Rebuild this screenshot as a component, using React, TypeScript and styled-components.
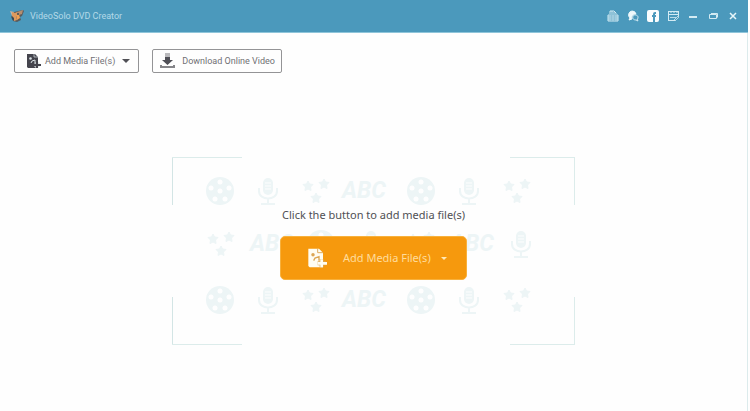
import React from "react";
import styled, { createGlobalStyle, css } from "styled-components";

const GlobalStyle = createGlobalStyle`
  * { box-sizing: border-box; }
  body {
    margin: 0;
    background: #fefefe;
    font-family: "Noto Sans", "Open Sans", sans-serif;
  }
`;

const Window = styled.div`
  display: flex;
  flex-direction: column;
  min-height: 100vh;
  margin-right: 2px;
  border-right: 1px solid #dcebec;
  background: #fefefe;
`;

const TitleBar = styled.header`
  display: flex;
  align-items: center;
  height: 33px;
  margin-right: -1px;
  padding: 0 8px 0 9px;
  background: #4b99bc;
  border-bottom: 1px solid #8fc5da;
`;

const AppTitle = styled.h1`
  flex: 1;
  margin: 0 0 0 5px;
  color: #b4d9e8;
  font-family: Roboto, "Liberation Sans", sans-serif;
  font-size: 9px;
  font-weight: 400;
  line-height: 12px;
`;

const TitleActions = styled.div`
  display: flex;
  align-items: center;
  gap: 6px;
`;

const TitleButton = styled.button`
  display: grid;
  place-items: center;
  width: 14px;
  height: 16px;
  padding: 0;
  border: 0;
  background: none;
  color: #d3ebf3;
`;

const Toolbar = styled.div`
  display: flex;
  gap: 13px;
  padding: 16px 14px 0;
`;

const ToolButton = styled.button<{ $menu?: boolean }>`
  display: flex;
  align-items: center;
  gap: ${({ $menu }) => ($menu ? 4 : 6)}px;
  height: 24px;
  padding: ${({ $menu }) => ($menu ? "0 8px 0 11px" : "0 6px")};
  border: 1px solid #949496;
  border-radius: 2px;
  background: #fefefe;
  color: #707074;
  font-family: Roboto, "Liberation Sans", sans-serif;
  font-size: 9px;
  line-height: 12px;
  white-space: nowrap;
`;

const Caret = styled.span<{ $light?: boolean }>`
  border: solid transparent;
  ${({ $light }) =>
    $light
      ? css`
          margin-left: 10px;
          border-width: 3px 3px 0;
          border-top-color: #ffe9b8;
        `
      : css`
          margin-left: 3px;
          border-width: 4px 4px 0;
          border-top-color: #505056;
        `}
`;

const Stage = styled.main`
  display: flex;
  flex: 1;
  justify-content: center;
  align-items: flex-start;
  padding: 84px 16px 16px;
`;

const line = "linear-gradient(#d3e5e5, #d3e5e5)";
const paleLine = "linear-gradient(#dceceb, #dceceb)";

const DropZone = styled.section`
  display: grid;
  width: 403px;
  max-width: 100%;
  background-image: ${[line, paleLine, line, paleLine].map((side) => `${paleLine}, ${side}`).join(", ")};
  background-repeat: no-repeat;
  background-position: left top, left top, right top, right top, left bottom,
    left bottom, right bottom, right bottom;
  background-size: 70px 1px, 1px 48px, 65px 1px, 1px 48px, 70px 1px, 1px 48px,
    65px 1px, 1px 48px;

  > * {
    grid-area: 1 / 1;
  }
`;

const Pattern = styled.div`
  display: grid;
  grid-template-rows: 48px 58px 53px;
  align-content: start;
  padding: 10px 0 19px 24px;
  color: #edf5f6;
`;

const PatternRow = styled.div<{ $offset?: boolean }>`
  display: grid;
  grid-template-columns: ${({ $offset }) =>
    $offset ? "repeat(7, 50px)" : "repeat(3, 48px) 57px repeat(3, 48px)"};
  align-items: center;
  justify-items: center;
`;

const Letters = styled.span<{ $start?: boolean }>`
  justify-self: ${({ $start }) => ($start ? "start" : "center")};
  padding-left: 2px;
  font-family: Roboto, "Liberation Sans", sans-serif;
  font-size: 23px;
  font-style: italic;
  font-weight: 700;
  line-height: 24px;
`;

const Prompt = styled.div`
  z-index: 1;
  display: flex;
  flex-direction: column;
  align-items: center;
  padding-top: 50px;
`;

const PromptText = styled.p`
  margin: 0 0 13px;
  color: #505054;
  font-size: 11px;
  line-height: 16px;
`;

const PrimaryButton = styled.button`
  display: flex;
  align-items: center;
  width: 187px;
  height: 44px;
  padding: 0 16px 0 26px;
  border: 1px solid #f8b13c;
  border-radius: 5px;
  background: #f6990d;
  color: #ffdc9c;
  font-family: inherit;
  font-size: 11px;
  line-height: 16px;
  white-space: nowrap;
`;

const PrimaryLabel = styled.span`
  margin-left: 16px;
`;

const Logo = () => (
  <svg width="16" height="14" viewBox="0 0 16 14" aria-hidden="true">
    <path d="M1 2l4 1 1 3-3 1z" fill="#c3b3a2" />
    <path d="M5 3l9-2 1 1-2 5-2 1 1 3-4 2-4-1-2-4z" fill="#595b5d" />
    <path d="M3 3l3 1 2-1 3 1-1 2-3 1 1 4-3 1-2-4z" fill="#dc995f" />
    <path d="M8 3l6-2-1 4-3 1z" fill="#b58e70" />
    <path d="M7 6l3-1 1 4-3 2z" fill="#f0a052" />
    <path d="M3 7l2 2v3L3 10z" fill="#394c58" />
    <circle cx="9" cy="5" r="1" fill="#394c58" />
  </svg>
);

const MediaIcon = ({ light = false }: { light?: boolean }) => {
  const page = light ? "#fffdf2" : "#44444d";
  const mark = light ? "#dca653" : "#d9e1e4";
  return (
    <svg
      width={light ? 20 : 15}
      height={light ? 22 : 16}
      viewBox="0 0 15 16"
      aria-hidden="true"
    >
      <path d="M1 1h8l3 3v5h-1v3h1v3H2l-1-1z" fill={page} />
      <path d="M8 1v3h4" fill="none" stroke={mark} strokeWidth="0.700" />
      <circle cx="4.500" cy="5.500" r="1.300" fill={mark} />
      <path d="M5 10l1-2 3-1v3" fill="none" stroke={mark} />
      <path d="M11 9v6M8 12h6" stroke={mark} strokeWidth="3" />
      <path d="M11 9v6M8 12h7" stroke={page} strokeWidth="2" />
    </svg>
  );
};

const DownloadIcon = () => (
  <svg width="17" height="16" viewBox="0 0 17 16" aria-hidden="true">
    <path d="M6 1h5M6 3h5" stroke="#77777c" />
    <path d="M6 4h5v3h3l-5.500 5L3 7h3z" fill="#505057" />
    <path d="M2 12v2h13v-2" fill="none" stroke="#858589" strokeWidth="2" />
  </svg>
);

const CartIcon = () => (
  <svg width="12" height="12" viewBox="0 0 12 12" fill="none" stroke="currentColor" aria-hidden="true">
    <path d="M3 4V1h4l2 2v1M1 5h10v6H1zM1 7h10M1 9h10M5 1v3M7 2v2" />
    <path d="M3 5v6M6 5v6M9 5v6" strokeOpacity="0.500" />
  </svg>
);

const ChatIcon = () => (
  <svg width="12" height="12" viewBox="0 0 12 12" aria-hidden="true">
    <path d="M5 1a4 4 0 0 1 4 3c-3 0-5 2-4 5L2 10l1-2a4 4 0 0 1 2-7z" fill="#eef8fb" stroke="#eef8fb" />
    <path d="M6 6c1-2 5-1 5 1 0 1 0 2-1 2l1 2-2-1c-2 0-4-1-3-4z" fill="#4b99bc" stroke="currentColor" />
  </svg>
);

const FacebookIcon = () => (
  <svg width="12" height="12" viewBox="0 0 12 12" aria-hidden="true">
    <rect width="12" height="12" rx="2" fill="#fafdfe" />
    <path d="M9 3H8Q7 3 7 4v8M5 6h4" fill="none" stroke="#4b99bc" strokeWidth="2" />
  </svg>
);

const RegisterIcon = () => (
  <svg width="13" height="12" viewBox="0 0 13 12" fill="none" stroke="currentColor" aria-hidden="true">
    <path d="M1 1.500h11M1 4.500h11M1 10.500h7M1.500 1v10M11.500 1v5M4 3v-2M7 3v-2M10 3v-2" />
    <path d="M3 7.500h6M7 10l4-4 1 1-4 4z" strokeOpacity="0.800" />
  </svg>
);

const MinimizeIcon = () => (
  <svg width="10" height="10" viewBox="0 0 10 10" aria-hidden="true">
    <path d="M1 5h8v2H1z" fill="currentColor" />
  </svg>
);

const MaximizeIcon = () => (
  <svg width="10" height="10" viewBox="0 0 10 10" fill="none" stroke="currentColor" aria-hidden="true">
    <path d="M1.500 3.500h7v4h-7zM3 2.500h6.500v4" />
  </svg>
);

const CloseIcon = () => (
  <svg width="10" height="10" viewBox="0 0 10 10" fill="none" stroke="#e6f6fa" strokeWidth="1.500" aria-hidden="true">
    <path d="M2 2l6 6M8 2L2 8" />
  </svg>
);

const starPath = "M0-5l1.500 3 3.500.500-2.500 2.500.500 3.500-3-1.500-3 1.500.500-3.500L-5-1.500l3.500-.500z";

const Stars = () => (
  <svg width="28" height="26" viewBox="0 0 28 26" fill="currentColor" stroke="currentColor" aria-hidden="true">
    <path d={starPath} transform="translate(6 8)" />
    <path d={starPath} transform="translate(22 6)" />
    <path d={starPath} transform="translate(14 20)" />
  </svg>
);

const Reel = () => (
  <svg width="28" height="28" viewBox="0 0 28 28" aria-hidden="true">
    <circle cx="14" cy="14" r="14" fill="currentColor" />
    <g fill="#fefefe">
      <circle cx="14" cy="14" r="2.500" />
      <circle cx="14" cy="5" r="2.500" />
      <circle cx="23" cy="11" r="2.500" />
      <circle cx="19" cy="22" r="2.500" />
      <circle cx="9" cy="22" r="2.500" />
      <circle cx="5" cy="11" r="2.500" />
    </g>
  </svg>
);

const Mic = () => (
  <svg width="20" height="28" viewBox="0 0 20 28" fill="none" stroke="currentColor" strokeWidth="2" aria-hidden="true">
    <rect x="5" y="1" width="10" height="17" rx="5" fill="currentColor" stroke="none" />
    <path d="M7 6h6M7 9h6M7 12h6" stroke="#fefefe" strokeWidth="1" />
    <path d="M1 11v3c0 10 18 10 18 0v-3M10 21v5M3 27h14" />
  </svg>
);

const titleActions = [
  { label: "Purchase", Icon: CartIcon },
  { label: "Feedback", Icon: ChatIcon },
  { label: "Facebook", Icon: FacebookIcon },
  { label: "Register", Icon: RegisterIcon },
  { label: "Minimize", Icon: MinimizeIcon },
  { label: "Maximize", Icon: MaximizeIcon },
  { label: "Close", Icon: CloseIcon },
];

const StraightRow = () => (
  <PatternRow>
    <Reel />
    <Mic />
    <Stars />
    <Letters $start>ABC</Letters>
    <Reel />
    <Mic />
    <Stars />
  </PatternRow>
);

export default function App() {
  return (
    <>
      <GlobalStyle />
      <Window>
        <TitleBar>
          <Logo />
          <AppTitle>VideoSolo DVD Creator</AppTitle>
          <TitleActions>
            {titleActions.map(({ label, Icon }) => (
              <TitleButton key={label} type="button" aria-label={label}>
                <Icon />
              </TitleButton>
            ))}
          </TitleActions>
        </TitleBar>
        <Toolbar>
          <ToolButton type="button" $menu>
            <MediaIcon />
            Add Media File(s)
            <Caret />
          </ToolButton>
          <ToolButton type="button">
            <DownloadIcon />
            Download Online Video
          </ToolButton>
        </Toolbar>
        <Stage>
          <DropZone>
            <Pattern aria-hidden="true">
              <StraightRow />
              <PatternRow $offset>
                <Stars />
                <Letters>ABC</Letters>
                <Reel />
                <Mic />
                <Stars />
                <Letters>ABC</Letters>
                <Mic />
              </PatternRow>
              <StraightRow />
            </Pattern>
            <Prompt>
              <PromptText>Click the button to add media file(s)</PromptText>
              <PrimaryButton type="button">
                <MediaIcon light />
                <PrimaryLabel>Add Media File(s)</PrimaryLabel>
                <Caret $light />
              </PrimaryButton>
            </Prompt>
          </DropZone>
        </Stage>
      </Window>
    </>
  );
}
